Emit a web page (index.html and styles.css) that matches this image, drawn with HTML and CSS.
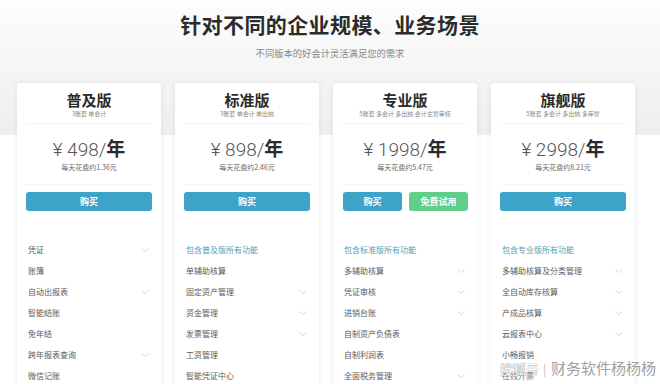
FILE: index.html
```html
<!DOCTYPE html>
<html lang="zh-CN">
<head>
<meta charset="utf-8">
<title>好会计版本</title>
<link rel="stylesheet" href="styles.css">
</head>
<body>
<div class="page">
  <header class="hero">
    <h1 class="hero-title">针对不同的企业规模、业务场景</h1>
    <p class="hero-sub">不同版本的好会计灵活满足您的需求</p>
  </header>
  <section class="cards">
    <article class="card">
      <div class="card-head">
        <h2 class="card-title">普及版</h2>
        <p class="card-desc">3账套 单会计</p>
      </div>
      <div class="price-block">
        <div class="price"><span class="num">¥ 498/</span><b class="unit">年</b></div>
        <p class="daily">每天花费约1.36元</p>
      </div>
      <div class="actions"><a class="btn btn-buy">购买</a></div>
      <ul class="features">
        <li>凭证<svg class="chev" viewBox="0 0 8 4"><polyline points="0.5,0.5 4,3.5 7.5,0.5"/></svg></li>
        <li>账簿</li>
        <li>自动出报表<svg class="chev" viewBox="0 0 8 4"><polyline points="0.5,0.5 4,3.5 7.5,0.5"/></svg></li>
        <li>智能结账</li>
        <li>免年结</li>
        <li>跨年报表查询<svg class="chev" viewBox="0 0 8 4"><polyline points="0.5,0.5 4,3.5 7.5,0.5"/></svg></li>
        <li class="boxed">微信记账</li>
      </ul>
    </article>
    <article class="card">
      <div class="card-head">
        <h2 class="card-title">标准版</h2>
        <p class="card-desc">3账套 单会计 单出纳</p>
      </div>
      <div class="price-block">
        <div class="price"><span class="num">¥ 898/</span><b class="unit">年</b></div>
        <p class="daily">每天花费约2.46元</p>
      </div>
      <div class="actions"><a class="btn btn-buy">购买</a></div>
      <ul class="features">
        <li class="cat">包含普及版所有功能</li>
        <li>单辅助核算</li>
        <li>固定资产管理<svg class="chev" viewBox="0 0 8 4"><polyline points="0.5,0.5 4,3.5 7.5,0.5"/></svg></li>
        <li>资金管理<svg class="chev" viewBox="0 0 8 4"><polyline points="0.5,0.5 4,3.5 7.5,0.5"/></svg></li>
        <li>发票管理<svg class="chev" viewBox="0 0 8 4"><polyline points="0.5,0.5 4,3.5 7.5,0.5"/></svg></li>
        <li>工资管理</li>
        <li>智能凭证中心</li>
      </ul>
    </article>
    <article class="card">
      <div class="card-head">
        <h2 class="card-title">专业版</h2>
        <p class="card-desc">5账套 多会计 多出纳 会计主管审核</p>
      </div>
      <div class="price-block">
        <div class="price"><span class="num">¥ 1998/</span><b class="unit">年</b></div>
        <p class="daily">每天花费约5.47元</p>
      </div>
      <div class="actions two"><a class="btn btn-buy">购买</a><a class="btn btn-try">免费试用</a></div>
      <ul class="features">
        <li class="cat">包含标准版所有功能</li>
        <li>多辅助核算<svg class="chev" viewBox="0 0 8 4"><polyline points="0.5,0.5 4,3.5 7.5,0.5"/></svg></li>
        <li>凭证审核<svg class="chev" viewBox="0 0 8 4"><polyline points="0.5,0.5 4,3.5 7.5,0.5"/></svg></li>
        <li>进销台账<svg class="chev" viewBox="0 0 8 4"><polyline points="0.5,0.5 4,3.5 7.5,0.5"/></svg></li>
        <li>自制资产负债表</li>
        <li>自制利润表</li>
        <li>全面税务管理<svg class="chev" viewBox="0 0 8 4"><polyline points="0.5,0.5 4,3.5 7.5,0.5"/></svg></li>
      </ul>
    </article>
    <article class="card">
      <div class="card-head">
        <h2 class="card-title">旗舰版</h2>
        <p class="card-desc">5账套 多会计 多出纳 多库管</p>
      </div>
      <div class="price-block">
        <div class="price"><span class="num">¥ 2998/</span><b class="unit">年</b></div>
        <p class="daily">每天花费约8.21元</p>
      </div>
      <div class="actions"><a class="btn btn-buy">购买</a></div>
      <ul class="features">
        <li class="cat">包含专业版所有功能</li>
        <li>多辅助核算及分类管理<svg class="chev" viewBox="0 0 8 4"><polyline points="0.5,0.5 4,3.5 7.5,0.5"/></svg></li>
        <li>全自动库存核算<svg class="chev" viewBox="0 0 8 4"><polyline points="0.5,0.5 4,3.5 7.5,0.5"/></svg></li>
        <li>产成品核算<svg class="chev" viewBox="0 0 8 4"><polyline points="0.5,0.5 4,3.5 7.5,0.5"/></svg></li>
        <li>云报表中心<svg class="chev" viewBox="0 0 8 4"><polyline points="0.5,0.5 4,3.5 7.5,0.5"/></svg></li>
        <li>小畅报销</li>
        <li class="under-wm">在线开票</li>
      </ul>
    </article>
  </section>
  <div class="watermark"><span class="wm-logo">搜狐号</span><span class="wm-sep">|</span>财务软件杨杨杨</div>
</div>
</body>
</html>
```
FILE: styles.css
```css
* { box-sizing: border-box; }
html, body { margin: 0; padding: 0; }
body {
  width: 660px;
  height: 384px;
  overflow: hidden;
  font-family: "Noto Sans CJK SC", "Noto Sans", sans-serif;
  color: #333;
  background:
    linear-gradient(#fdfdfd, #eeeeee) top left / 100% 135px no-repeat,
    #ffffff;
}
.page { position: relative; height: 384px; }
.hero { text-align: center; padding-top: 9px; }
.hero-title {
  margin: 0;
  font-size: 21px;
  line-height: 30px;
  font-weight: 700;
  color: #2b2b2b;
  letter-spacing: 0.4px;
}
.hero-sub {
  margin: 8px 0 0;
  font-size: 9.3px;
  line-height: 12px;
  color: #888;
}
.cards {
  display: flex;
  gap: 14px;
  padding-left: 17px;
  margin-top: 24px;
}
.card {
  width: 144px;
  height: 320px;
  background: #fff;
  border-radius: 3px;
  box-shadow: 0 0 6px rgba(0,0,0,0.08);
  display: flex;
  flex-direction: column;
}
.card-head {
  text-align: center;
  padding-top: 8px;
  margin: 0 9px;
  height: 41px;
  border-bottom: 1px solid #f3f3f3;
}
.card-title {
  margin: 0;
  font-size: 15px;
  line-height: 18px;
  font-weight: 700;
  color: #2b2b2b;
}
.card-desc {
  margin: 1px 0 0;
  font-size: 6px;
  line-height: 8px;
  color: #888;
  white-space: nowrap;
}
.price-block {
  text-align: center;
  margin: 0 9px;
  height: 61px;
  padding-top: 12px;
  border-bottom: 1px solid #f5f5f5;
}
.price {
  font-family: Roboto, "Noto Sans CJK SC", sans-serif;
  line-height: 24px;
  height: 24px;
  color: #555;
}
.price .num { font-size: 19px; font-weight: 300; }
.price .unit {
  font-family: "Noto Sans CJK SC", sans-serif;
  font-size: 19px;
  font-weight: 700;
  color: #2b2b2b;
}
.daily {
  margin: 2px 0 0;
  font-size: 7px;
  line-height: 10px;
  color: #666;
}
.actions {
  display: flex;
  gap: 7px;
  padding: 7px 9px 0;
}
.actions.two { padding: 7px 9px 0 10px; }
.btn {
  flex: 1;
  height: 19px;
  border-radius: 3px;
  color: #fff;
  font-size: 9px;
  font-weight: 700;
  line-height: 19px;
  text-align: center;
}
.btn-buy { background: #3ea3c9; }
.btn-try { background: #5fcf8b; }
.features {
  list-style: none;
  margin: 28px 0 0;
  padding: 0 10px 0 11px;
}
.features li {
  position: relative;
  height: 21px;
  font-size: 8px;
  line-height: 21px;
  color: #5a5a5a;
  display: flex;
  align-items: center;
  justify-content: space-between;
}
.features li.cat { color: #4a9fba; }
.features li.boxed {
  width: 80px;
  margin-left: -11px;
  padding-left: 11px;
}
.features li.under-wm { color: #777; }
.chev {
  width: 8px;
  height: 4px;
  margin-right: 2px;
  fill: none;
  stroke: #d8d8d8;
  stroke-width: 1;
}
.watermark {
  position: absolute;
  left: 500px;
  top: 358px;
  font-size: 15px;
  line-height: 22px;
  color: #a0a0a0;
  font-family: "Liberation Serif", "Noto Sans CJK SC", serif;
  text-shadow: 0 0 2px #fff, 0 0 2px #fff;
  white-space: nowrap;
}
.wm-logo {
  color: #fff;
  font-family: "Noto Sans CJK SC", sans-serif;
  font-size: 13px;
  text-shadow: 0 0 1px #888, 0 0 1px #888;
}
.wm-sep { margin: 0 5px 0 4px; color: #bbb; }
```
